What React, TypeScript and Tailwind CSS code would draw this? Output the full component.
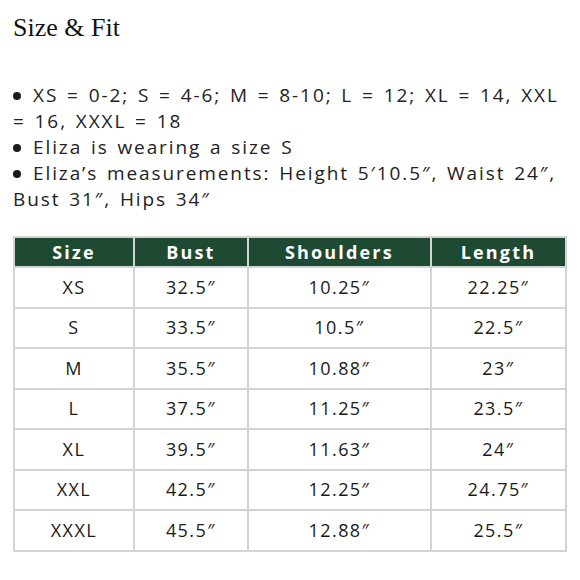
const bullets = [
  "XS = 0-2; S = 4-6; M = 8-10; L = 12; XL = 14, XXL = 16, XXXL = 18",
  "Eliza is wearing a size S",
  "Eliza’s measurements: Height 5′10.5″, Waist 24″, Bust 31″, Hips 34″",
];

const headers = ["Size", "Bust", "Shoulders", "Length"];

const rows = [
  ["XS", "32.5″", "10.25″", "22.25″"],
  ["S", "33.5″", "10.5″", "22.5″"],
  ["M", "35.5″", "10.88″", "23″"],
  ["L", "37.5″", "11.25″", "23.5″"],
  ["XL", "39.5″", "11.63″", "24″"],
  ["XXL", "42.5″", "12.25″", "24.75″"],
  ["XXXL", "45.5″", "12.88″", "25.5″"],
];

const colWidths = ["w-[121px]", "w-[115px]", "w-[184px]", "w-[136px]"];

export default function App() {
  return (
    <div className="w-[580px] h-[580px] bg-white px-[13px] pt-[12px] text-[#1a1a1a]">
      <h1 className="font-['Liberation_Serif',serif] text-[26px] leading-[32px] text-[#111]">
        Size &amp; Fit
      </h1>

      <ul className="mt-[38px] font-['Open_Sans',sans-serif] text-[19px] leading-[26px] tracking-[0.1em] [word-spacing:2px] text-[#222]">
        {bullets.map((b) => (
          <li key={b}>
            <span className="inline-block w-[8px] h-[8px] rounded-full bg-[#1a1a1a] mr-[12px] align-[2px]" />
            {b}
          </li>
        ))}
      </ul>

      <table className="mt-[24px] border-collapse table-fixed font-['Open_Sans',sans-serif]">
        <thead>
          <tr className="bg-[#1e4932] h-[30px]">
            {headers.map((h, i) => (
              <th
                key={h}
                className={`${colWidths[i]} border-2 border-[#d3d3d3] text-white font-bold text-[18px] tracking-[0.12em] leading-none`}
              >
                {h}
              </th>
            ))}
          </tr>
        </thead>
        <tbody>
          {rows.map((r) => (
            <tr key={r[0]} className="h-[40.5px]">
              {r.map((c, i) => (
                <td
                  key={i}
                  className="border-2 border-[#d3d3d3] text-center text-[18px] tracking-[0.08em] text-[#1a1a1a]"
                >
                  {c}
                </td>
              ))}
            </tr>
          ))}
        </tbody>
      </table>
    </div>
  );
}
